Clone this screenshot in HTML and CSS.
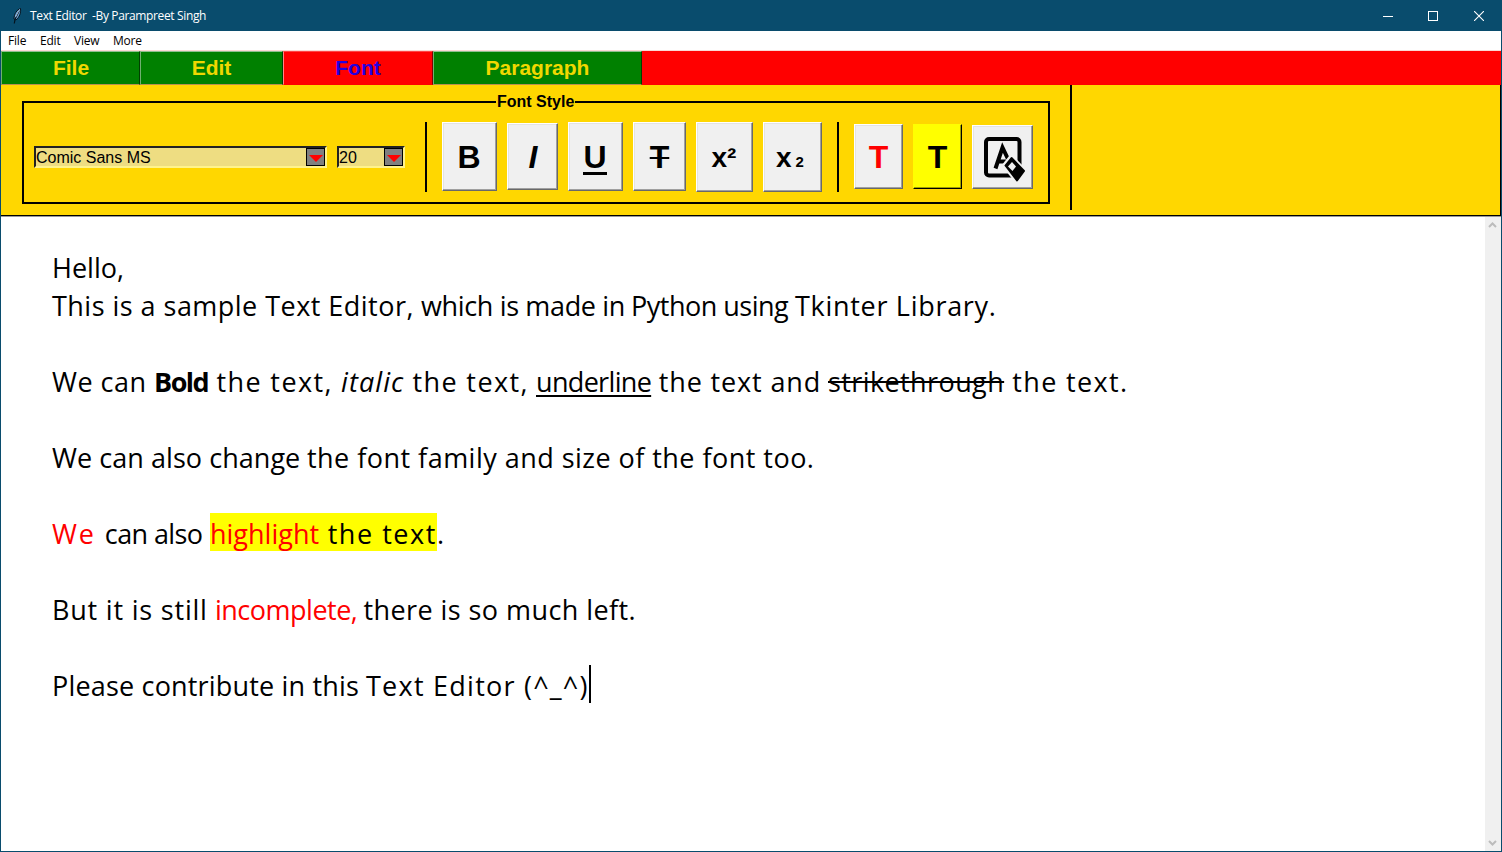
FILE: index.html
```html
<!DOCTYPE html>
<html lang="en">
<head>
<meta charset="utf-8">
<title>Text Editor</title>
<link rel="stylesheet" href="styles.css">
</head>
<body>
<div class="window">
  <header class="titlebar">
    <svg class="feather" width="10" height="16" viewBox="0 0 10 16"><path d="M8.5 0.5C5 1.5 2 6 2 11L4 12C7.5 9 9 5 8.5.5Z" fill="#6ca2d8" stroke="#05131d"/><path d="M7.3 2.500L3 11.500 2.300 15.500" fill="none" stroke="#05131d" stroke-width="1.200"/><path d="M7.500 1.500L3.600 9" stroke="#d8edff" stroke-width=".7"/></svg>
    <span class="title">Text Editor&nbsp; -By Parampreet Singh</span>
    <div class="controls">
      <svg width="10" height="10"><path d="M0 5.5H10" stroke="#fff"/></svg>
      <svg width="10" height="10"><rect x=".5" y=".5" width="9" height="9" fill="none" stroke="#fff"/></svg>
      <svg width="10" height="10"><path d="M0 0L10 10M10 0L0 10" stroke="#fff" stroke-width="1.1"/></svg>
    </div>
  </header>
  <nav class="menubar"><span class="m-file">File</span><span class="m-edit">Edit</span><span class="m-view">View</span><span>More</span></nav>
  <nav class="tabs"><span class="tab t-file">File</span><span class="tab t-edit">Edit</span><span class="tab t-font active">Font</span><span class="tab t-par">Paragraph</span></nav>
  <section class="ribbon">
    <div class="group">
      <span class="legend">Font Style</span>
      <div class="combo family"><span>Comic Sans MS</span><i><svg width="14" height="7"><path d="M0 0H14L7 7Z" fill="red"/></svg></i></div>
      <div class="combo size"><span>20</span><i><svg width="14" height="7"><path d="M0 0H14L7 7Z" fill="red"/></svg></i></div>
      <div class="sep first"></div>
      <button class="btn b">B</button>
      <button class="btn i"><em>I</em></button>
      <button class="btn u"><span>U</span></button>
      <button class="btn s"><span>T</span></button>
      <button class="btn sup">x²</button>
      <button class="btn sub">x<span>2</span></button>
      <div class="sep"></div>
      <button class="btn color">T</button>
      <button class="btn mark">T</button>
      <button class="btn clear"><svg width="42" height="46" viewBox="0 0 42 46"><rect x="2" y="2" width="33.500" height="36.500" rx="3" fill="none" stroke="#000" stroke-width="4"/><path d="M11.500 31.500L18.500 10.500L24 22M14 24.500H22" fill="none" stroke="#000" stroke-width="4"/><path d="M17.500 28.500L27 16.500 45 35 34 49Z" fill="#f0f0f0"/><path d="M21.500 28.500L27.500 21 40 34 33 43.500Z" fill="#000" stroke="#000" stroke-width="2" stroke-linejoin="round"/><path d="M24 29.500L28 25 32 29.500 28.500 34Z" fill="#f0f0f0"/></svg></button>
    </div>
    <div class="divider"></div>
  </section>
  <main class="editor">
    <div class="page">
      <p class="l1">Hello,</p>
      <p><span class="r a1">This is a sample Text Editor, </span><span class="r a2">which is made in </span><span class="r a3">Python using </span><span class="r a4">Tkinter Library.</span></p>
      <p></p>
      <p><span class="r r1">We can </span><b class="r r2">Bold</b><span class="r r3"> the text, </span><em class="r r4">italic</em><span class="r r5"> the text, </span><u class="r r6">underline</u><span class="r r7"> the text and </span><s class="r r8">strikethrough</s><span class="r r9"> the text.</span></p>
      <p></p>
      <p><span class="r c1">We can also change </span><span class="r c2">the font family and size of the font too.</span></p>
      <p></p>
      <p><span class="r h1"><span class="red we">We </span>can also </span><span class="r h2 mark"><span class="red">highlight</span><span class="wide"> the text</span></span><span class="r">.</span></p>
      <p></p>
      <p><span class="r k1">But it is still </span><span class="r k2 red">incomplete,</span><span class="r k3"> there is so much left.</span></p>
      <p></p>
      <p><span class="r z1">Please contribute in this </span><span class="r z2">Text Editor </span><span class="r z3">(^_^)</span><span class="caret"></span></p>
    </div>
    <div class="scroll">
      <svg width="9" height="7"><path d="M1 6L4.500 2.500 8 6" fill="none" stroke="#bcbcbc" stroke-width="2"/></svg>
      <svg width="9" height="7"><path d="M1 1L4.500 4.500 8 1" fill="none" stroke="#bcbcbc" stroke-width="2"/></svg>
    </div>
  </main>
</div>
</body>
</html>
```
FILE: styles.css
```css
* { box-sizing: border-box; }
body { margin: 0; font-family: "Liberation Sans", Arial, sans-serif; color: #000; }
.window { width: 1502px; height: 852px; overflow: hidden; display: flex; flex-direction: column; background: #fff; border: solid #094c6d; border-width: 0 1px 1px; }
.titlebar { height: 31px; background: #094c6d; display: flex; align-items: center; padding: 0 18px 0 11px; color: #fff; font: 12px/31px "Open Sans", sans-serif; }
.title { margin-left: 8px; white-space: pre; letter-spacing: -.36px; }
.controls { margin-left: auto; display: flex; gap: 36px; margin-right: -1px; }
.controls svg { margin-left: -1px; margin-right: 0.5px; }
.menubar { height: 20px; display: flex; padding-left: 7px; font: 12px/20px "Open Sans", sans-serif; letter-spacing: -.2px; border-bottom: 1px solid #fbd8d4; }
.m-file { width: 32px; }
.m-edit { width: 34px; }
.m-view { width: 39px; }
.tabs { height: 34px; display: flex; background: #f00; }
.tab { height: 34px; background: #008000; color: #f0d800; font-size: 21px; line-height: 32px; font-weight: bold; text-align: center; border: 1px solid; border-color: #8fc08f #004000 #b89050 #70b070; }
.t-file { width: 139px; padding-left: 1px; }
.t-edit { width: 143px; }
.t-font { width: 150px; }
.t-par { width: 209px; }
.tab.active { background: #f00; color: #2400e0; border-color: #f44 #800000 #f00 #f88; }
.ribbon { height: 131px; background: #ffd700; display: flex; border-bottom: 1px solid #000; border-right: 1px solid #000; }
.group { position: relative; margin: 16px 0 0 21px; width: 1028px; height: 103px; border: 2px solid #000; display: flex; align-items: center; gap: 10px; padding: 8px 0 0 10px; }
.legend { position: absolute; left: 472px; top: -10px; padding: 0 1px; background: #ffd700; font-size: 16px; line-height: 18px; font-weight: bold; }
.combo { height: 22px; background: #eedd82; border: 2px solid; border-color: #222 #fff38c #fff38c #222; display: flex; align-items: center; justify-content: space-between; font-size: 16px; line-height: 20px; }
.combo > span { height: 18px; }
.combo i { width: 19px; height: 18px; background: #808080; border: 1px solid #000; display: flex; align-items: center; justify-content: center; padding-top: 4px; }
.family { width: 293px; }
.size { width: 68px; }
.sep { width: 2px; height: 70px; background: #000; margin: 0 5px; }
.sep.first { margin-left: 10px; }
.btn { padding: 0; margin: 0; background: #f0f0f0; border: 1px solid; border-color: #fff #696969 #696969 #fff; box-shadow: inset -1px -1px #a0a0a0, inset 1px 1px #e3e3e3; font: bold 32px/36px "Liberation Sans", Arial, sans-serif; color: #000; display: flex; align-items: center; justify-content: center; }
.b { width: 55px; height: 69px; padding-right: 1px; }
.i { width: 51px; height: 67px; padding-left: 1px; }
.u { width: 55px; height: 69px; }
.u span { height: 36px; border-bottom: 3px solid #000; line-height: 36px; margin-right: 1px; }
.s { width: 53px; height: 69px; }
.s span { text-decoration: line-through 2px; }
.sup { width: 57px; height: 70px; font-size: 28px; padding: 2px 1px 0 0; }
.sub { width: 59px; height: 70px; font-size: 28px; padding: 2px 5px 0 0; }
.sub span { font-size: 15px; margin: 8px 0 0 4px; }
.color { width: 49px; height: 65px; color: #f00; }
.btn.mark { width: 49px; height: 65px; background: #ff0; border-color: #ff0 #000 #000 #ff0; box-shadow: inset -1px -1px #a0a000; }
.clear { width: 61px; height: 64px; }
.clear svg { margin: 6px 0 0 5px; }
.divider { width: 2px; height: 125px; margin-left: 20px; background: #000; }
.editor { height: 635px; display: flex; border-top: 1px solid #999; }
.page { width: 1484px; padding: 30px 0 0 51px; font: 27px/41px "Comic Sans MS", "Open Sans", sans-serif; }
.page p { margin: 0; height: 38px; white-space: pre; display: flex; }
.r { flex: none; height: 38px; }
.red { color: #f00; }
.page .mark { background: #ff0; }
.page u { text-decoration-thickness: 2px; text-underline-offset: 3px; text-decoration-skip-ink: none; }
.page s { text-decoration-thickness: 2px; }
.a1 { width: 369px; letter-spacing: .47px; }
.a2 { width: 210px; letter-spacing: -.35px; }
.a3 { width: 164px; letter-spacing: -.5px; }
.a4 { letter-spacing: .7px; }
.c1 { width: 255px; letter-spacing: .05px; }
.c2 { letter-spacing: .47px; }
.r1 { width: 102px; letter-spacing: .5px; }
.r2 { width: 54px; letter-spacing: -1.5px; }
.r3 { width: 133px; letter-spacing: 1.4px; }
.r4 { width: 63px; letter-spacing: 1.1px; }
.r5 { width: 132px; letter-spacing: 1.4px; }
.r6 { width: 115px; letter-spacing: -.67px; }
.r7 { width: 177px; letter-spacing: .85px; }
.r8 { width: 176px; letter-spacing: .4px; }
.r9 { letter-spacing: 1.35px; }
.h1 { width: 158px; letter-spacing: -.6px; }
.we { letter-spacing: 1.9px; }
.h2 { width: 227px; }
.wide { letter-spacing: 1.55px; }
.k1 { width: 163px; letter-spacing: .8px; }
.k2 { width: 141px; letter-spacing: -.5px; }
.k3 { letter-spacing: .43px; }
.z1 { width: 314px; letter-spacing: .18px; }
.z2 { width: 158px; letter-spacing: 1.25px; }
.z3 { width: 65px; letter-spacing: 1.2px; }
.caret { width: 2px; height: 38px; background: #000; }
.scroll { width: 16px; background: #f0f0f0; display: flex; flex-direction: column; align-items: center; justify-content: space-between; padding: 4px 1px 4px 0; }
```
